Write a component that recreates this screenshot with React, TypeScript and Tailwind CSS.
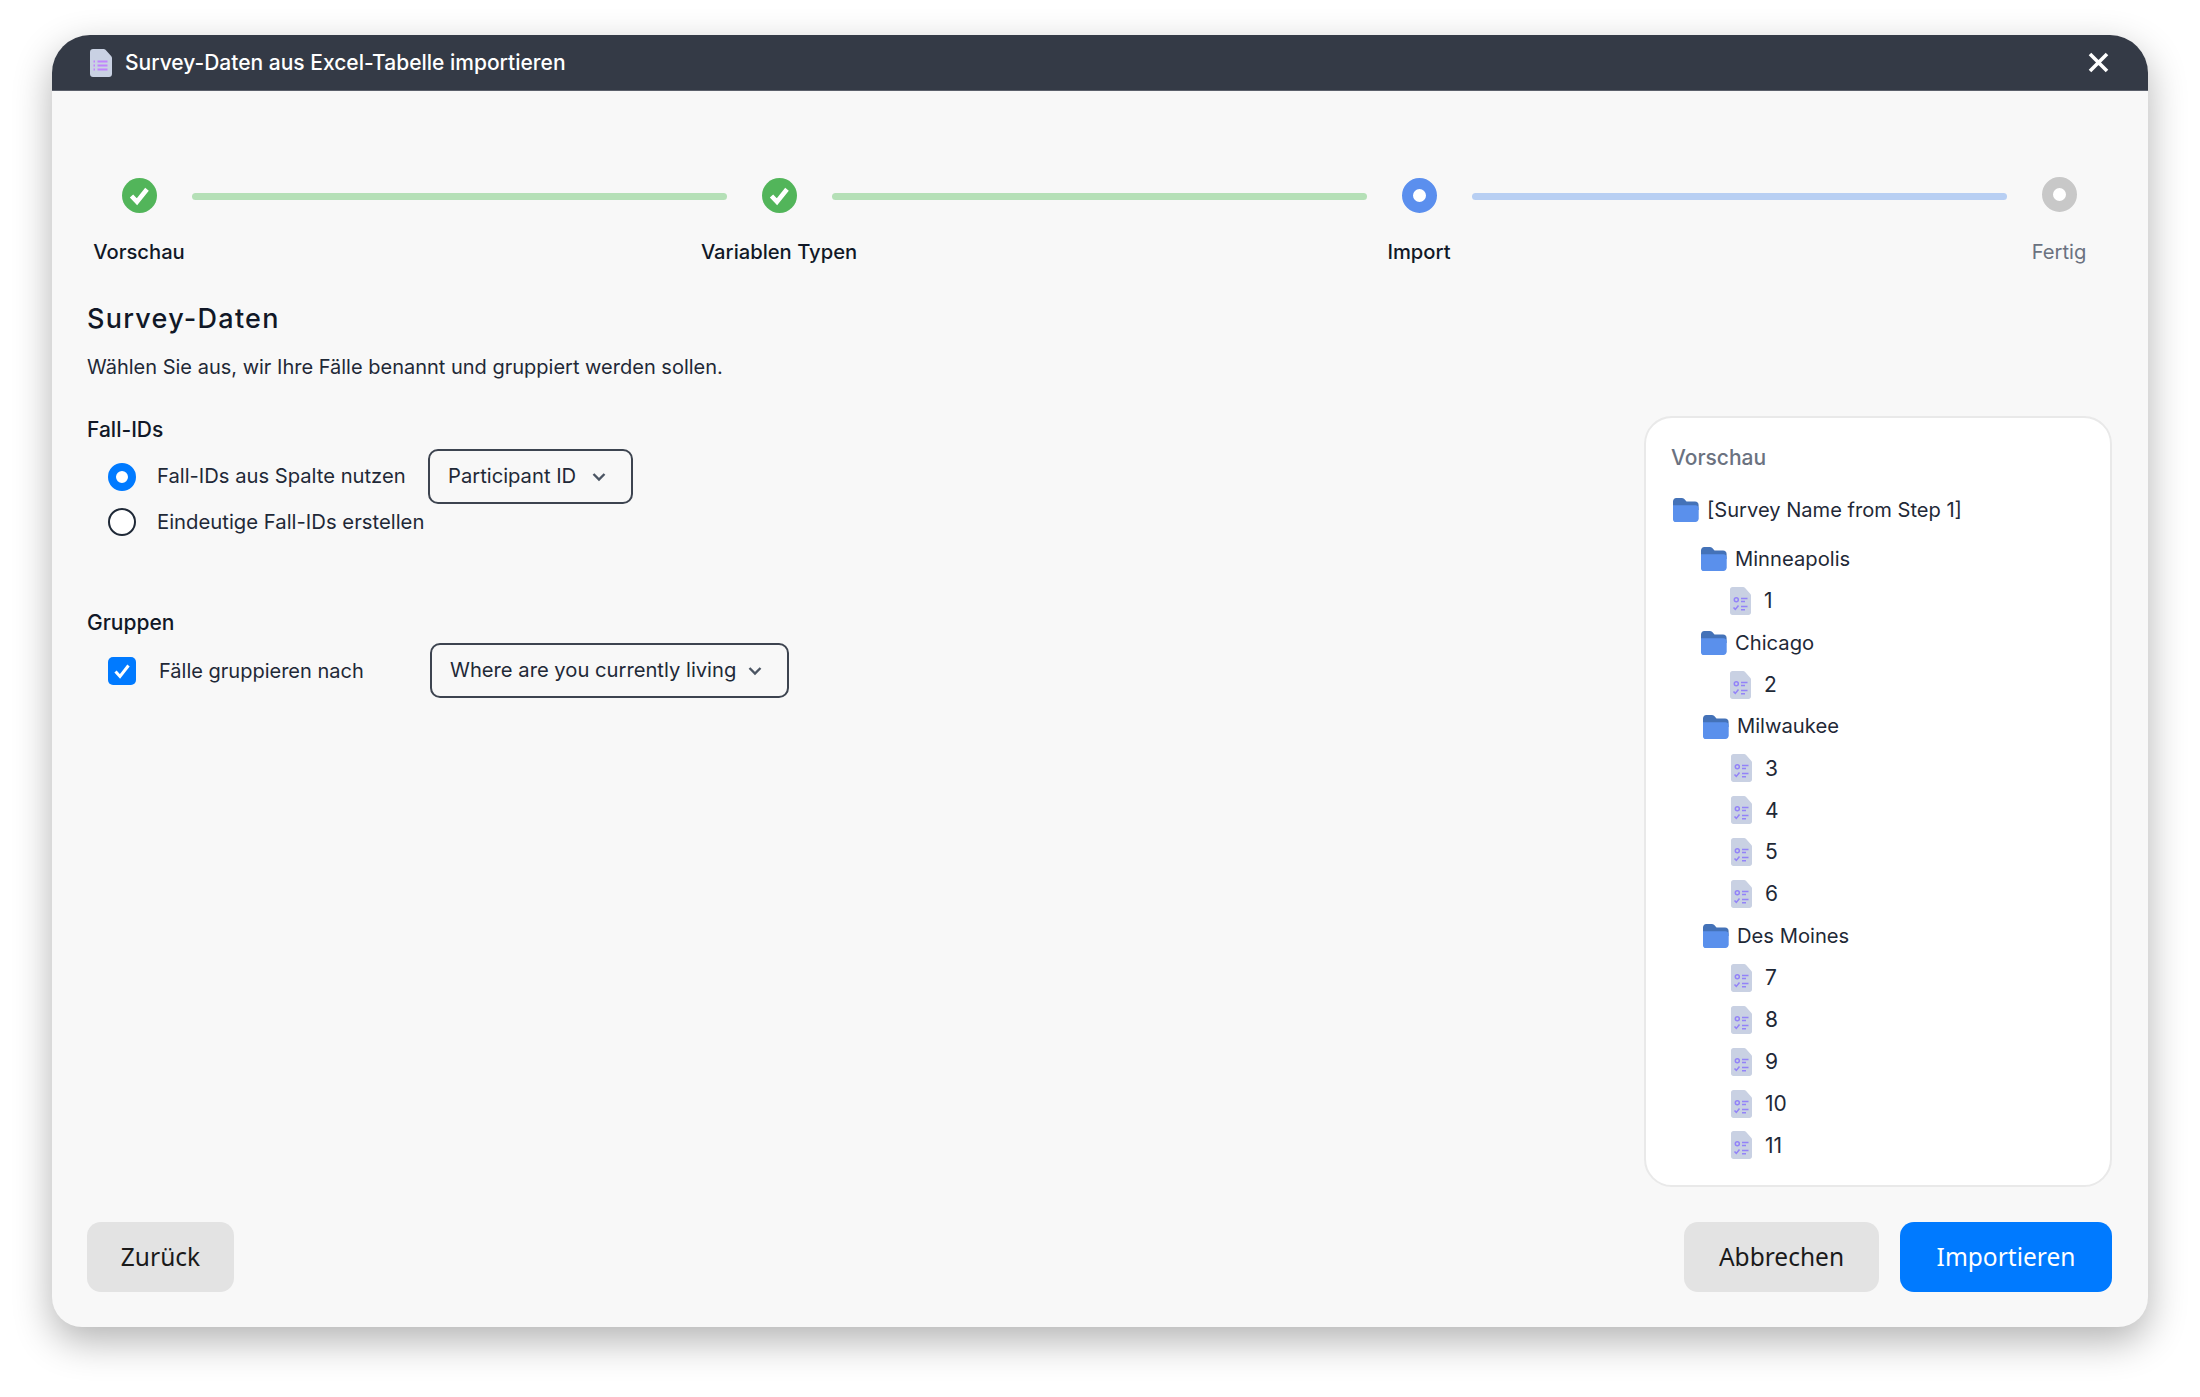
import React from 'react';

const FolderIcon = () => (
  <svg width="26" height="24" viewBox="0 0 26 24" className="shrink-0">
    <path d="M0 3.5C0 1.6 1.4 0 3.3 0h5.4c1 0 1.9.4 2.6 1.1L13.5 3.4H22c2.2 0 3.6 1.4 3.6 3.6V12H0z" fill="#4472b8" />
    <path d="M0 7.2h22.4c1.9 0 3.3 1.5 3.3 3.4v10c0 1.9-1.5 3.4-3.4 3.4H2.6C1.1 24 0 22.9 0 21.4z" fill="#5a90ec" />
  </svg>
);

const DocIcon = () => (
  <svg width="21" height="28" viewBox="0 0 21 28" className="shrink-0">
    <path d="M2.5 0h10.6c.7 0 1.3.3 1.8.7l5.3 6c.5.5.8 1.1.8 1.800V25.500c0 1.400-1.100 2.500-2.500 2.500h-16C1.100 28 0 26.900 0 25.500v-23C0 1.100 1.100 0 2.500 0z" fill="#c9d1e3" />
    <circle cx="6.3" cy="12.8" r="2" fill="none" stroke="#9383f8" strokeWidth="1.5" />
    <path d="M11 11.500h6.500M11 14.500h4" stroke="#9383f8" strokeWidth="1.5" />
    <path d="M3.500 20.500l1.800 1.900 3.200-3.800" fill="none" stroke="#9383f8" strokeWidth="1.6" />
    <path d="M11 19.500h6.500M11 22.800h4" stroke="#9383f8" strokeWidth="1.5" />
  </svg>
);

const HeaderDocIcon = () => (
  <svg width="22" height="28" viewBox="0 0 22 28" className="shrink-0">
    <path d="M3 0h10.500c.8 0 1.500.3 2 .8l5.600 6.100c.6.500.9 1.200.9 2V25c0 1.700-1.300 3-3 3H3c-1.700 0-3-1.300-3-3V3c0-1.700 1.300-3 3-3z" fill="#c9d1e3" />
    <path d="M7.500 12.500h10M7.500 16.500h10M7.500 20.500h10" stroke="#c084fc" strokeWidth="1.8" />
    <path d="M3.500 12.500h1.500M3.500 16.500h1.500M3.500 20.500h1.500" stroke="#c084fc" strokeWidth="1.8" />
  </svg>
);

const DoneCircle = () => (
  <svg width="35" height="35" viewBox="0 0 35 35">
    <circle cx="17.5" cy="17.5" r="17.5" fill="#52b55a" />
    <path d="M9.500 18l5.500 5.800 10-12.600" fill="none" stroke="#fff" strokeWidth="4.6" />
  </svg>
);

const Chevron = () => (
  <svg width="14" height="10" viewBox="0 0 14 10" className="shrink-0">
    <path d="M1.500 2l5.500 5.500L12.500 2" fill="none" stroke="#4b5563" strokeWidth="2.4" />
  </svg>
);

const Step = ({ label, muted, children }: { label: string; muted?: boolean; children: React.ReactNode }) => (
  <div className="flex w-[104px] shrink-0 flex-col items-center">
    <div className="h-[35px]">{children}</div>
    <div className={`mt-[27px] whitespace-nowrap text-[20.2px] leading-[24px] font-medium ${muted ? 'font-normal text-[#6b7280]' : 'text-[#111827]'}`}>{label}</div>
  </div>
);

const Bar = ({ color }: { color: string }) => <div className={`mt-[14.5px] ml-[1px] h-[7px] w-[535px] shrink-0 rounded-full ${color}`} />;

const Select = ({ label, width }: { label: string; width: string }) => (
  <div className={`flex h-[55px] items-center justify-between rounded-[10px] border-2 border-[#3d4450] pr-[25px] pl-[18px] text-[20.2px] text-[#1f2937] ${width}`}>
    <span className="whitespace-nowrap">{label}</span>
    <Chevron />
  </div>
);

type Row = { label: string; type: 'folder' | 'doc'; extra?: boolean };

const rows: Row[] = [
  { label: 'Minneapolis', type: 'folder' },
  { label: '1', type: 'doc' },
  { label: 'Chicago', type: 'folder' },
  { label: '2', type: 'doc' },
  { label: 'Milwaukee', type: 'folder', extra: true },
  { label: '3', type: 'doc', extra: true },
  { label: '4', type: 'doc', extra: true },
  { label: '5', type: 'doc', extra: true },
  { label: '6', type: 'doc', extra: true },
  { label: 'Des Moines', type: 'folder', extra: true },
  { label: '7', type: 'doc', extra: true },
  { label: '8', type: 'doc', extra: true },
  { label: '9', type: 'doc', extra: true },
  { label: '10', type: 'doc', extra: true },
  { label: '11', type: 'doc', extra: true },
];

export default function App() {
  return (
    <div className="h-[1397px] w-full overflow-hidden bg-white pt-[35px] pl-[52px] font-['Inter',sans-serif]">
      <div className="flex h-[1292px] w-[2096px] flex-col overflow-hidden rounded-t-[38px] rounded-b-[30px] bg-[#f8f8f8] [box-shadow:0_14px_38px_rgba(0,0,0,0.3)]">
        <div className="flex h-[56px] shrink-0 items-center border-b border-[#5b606b] bg-[#343a46] pr-[39px] pl-[38px]">
          <HeaderDocIcon />
          <span className="ml-[13px] pt-px text-[21px] font-medium text-white">Survey-Daten aus Excel-Tabelle importieren</span>
          <svg width="21" height="21" viewBox="0 0 21 21" className="ml-auto">
            <path d="M2 2l17 17M19 2L2 19" stroke="#fff" strokeWidth="3.6" />
          </svg>
        </div>

        <div className="flex flex-1 flex-col pt-[87px] pr-[36px] pb-[35px] pl-[35px]">
          <div className="flex">
            <Step label="Vorschau"><DoneCircle /></Step>
            <Bar color="bg-[#b5e0b7]" />
            <Step label="Variablen Typen"><DoneCircle /></Step>
            <Bar color="bg-[#b5e0b7]" />
            <Step label="Import"><div className="h-[35px] w-[35px] rounded-full border-[11px] border-[#5b8fee] bg-white" /></Step>
            <Bar color="bg-[#b8cff3]" />
            <Step label="Fertig" muted><div className="-mt-px h-[35px] w-[35px] rounded-full border-[11px] border-[#c8c8c8] bg-white" /></Step>
          </div>

          <h1 className="mt-[39px] text-[27px] leading-[32px] font-medium tracking-[1.25px] text-[#111827]">Survey-Daten</h1>
          <p className="mt-[18px] text-[20px] leading-[28px] text-[#1f2937]">Wählen Sie aus, wir Ihre Fälle benannt und gruppiert werden sollen.</p>

          <div className="mt-[35px] flex flex-1 justify-between">
            <div className="pt-[2px]">
              <div className="text-[21px] leading-[24px] font-medium text-[#111827]">Fall-IDs</div>
              <div className="mt-[7px] ml-[21px] flex items-center">
                <div className="h-[28px] w-[28px] rounded-full border-[8px] border-[#007aff] bg-white" />
                <span className="ml-[21px] w-[271px] text-[20.2px] text-[#1f2937]">Fall-IDs aus Spalte nutzen</span>
                <Select label="Participant ID" width="w-[205px]" />
              </div>
              <div className="mt-[4px] ml-[21px] flex h-[28px] items-center">
                <div className="h-[28px] w-[28px] rounded-full border-2 border-[#1f2937] bg-white" />
                <span className="ml-[21px] text-[20.3px] text-[#1f2937]">Eindeutige Fall-IDs erstellen</span>
              </div>
              <div className="mt-[75px] text-[21px] leading-[24px] font-medium text-[#111827]">Gruppen</div>
              <div className="mt-[8px] ml-[21px] flex items-center">
                <div className="flex h-[28px] w-[28px] items-center justify-center rounded-[5px] bg-[#007aff]">
                  <svg width="18" height="16" viewBox="0 0 18 16">
                    <path d="M2.500 8.500l4.500 5L15.500 2.500" fill="none" stroke="#fff" strokeWidth="3" />
                  </svg>
                </div>
                <span className="ml-[23px] w-[271px] text-[20px] text-[#1f2937]">Fälle gruppieren nach</span>
                <Select label="Where are you currently living" width="w-[359px]" />
              </div>
            </div>

            <div className="h-[771px] w-[468px] rounded-[28px] border-2 border-[#e9e9e9] bg-white pt-[28px] pl-[25px]">
              <div className="text-[21px] leading-[24px] font-medium text-[#6b7280]">Vorschau</div>
              <div className="mt-[19px] ml-[2px] flex h-[42px] items-center gap-[8px] text-[20.1px] text-[#1f2937]">
                <FolderIcon />
                <span>[Survey Name from Step 1]</span>
              </div>
              <div className="mt-[7px]">
                {rows.map((row) => (
                  <div key={row.label} className={`flex h-[41.9px] items-center text-[#1f2937] ${row.type === 'folder' ? 'gap-[8px] text-[20.2px]' : 'gap-[13px] text-[21px]'} ${row.type === 'folder' ? (row.extra ? 'ml-[32px]' : 'ml-[30px]') : row.extra ? 'ml-[60px]' : 'ml-[59px]'}`}>
                    {row.type === 'folder' ? <FolderIcon /> : <DocIcon />}
                    <span>{row.label}</span>
                  </div>
                ))}
              </div>
            </div>
          </div>

          <div className="flex items-center font-['Noto_Sans',sans-serif] text-[24.5px]">
            <button className="h-[70px] w-[147px] rounded-[14px] bg-[#e3e3e3] text-[#1a1a1a]">Zurück</button>
            <button className="ml-auto h-[70px] w-[195px] rounded-[14px] bg-[#e3e3e3] text-[#1a1a1a]">Abbrechen</button>
            <button className="ml-[21px] h-[70px] w-[212px] rounded-[14px] bg-[#007aff] text-white">Importieren</button>
          </div>
        </div>
      </div>
    </div>
  );
}
